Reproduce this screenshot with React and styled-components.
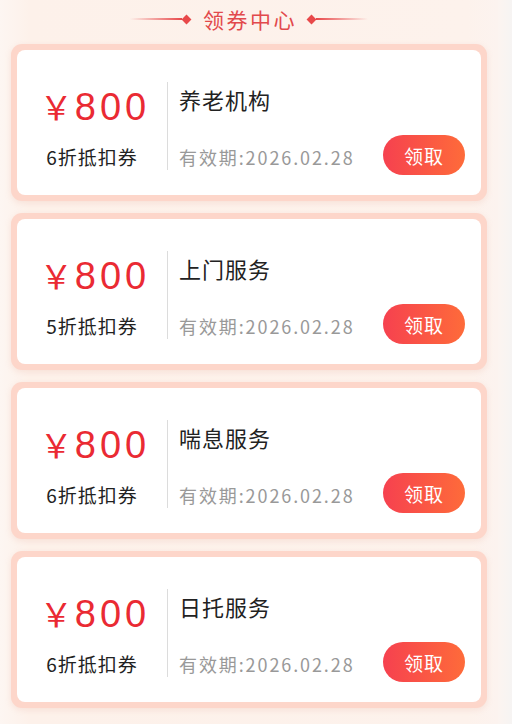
import React from 'react';
import styled, { createGlobalStyle } from 'styled-components';

const coupons = [
    { amount: 800, discount: '6折抵扣券', title: '养老机构', expire: '2026.02.28' },
    { amount: 800, discount: '5折抵扣券', title: '上门服务', expire: '2026.02.28' },
    { amount: 800, discount: '6折抵扣券', title: '喘息服务', expire: '2026.02.28' },
    { amount: 800, discount: '6折抵扣券', title: '日托服务', expire: '2026.02.28' },
];

function App() {
    return (
        <>
            <GlobalStyle />
            <Page>
                <Main>
                    <Header>
                        <Line />
                        <Diamond />
                        <HeaderTitle>领券中心</HeaderTitle>
                        <Diamond />
                        <Line right />
                    </Header>
                    <CouponList>
                        {coupons.map((c, i) => (
                            <CouponFrame key={i}>
                                <Coupon>
                                    <AmountBox>
                                        <Price>
                                            <Yen>￥</Yen>
                                            <Amount>{c.amount}</Amount>
                                        </Price>
                                        <Discount>{c.discount}</Discount>
                                    </AmountBox>
                                    <Divider />
                                    <InfoBox>
                                        <CouponTitle>{c.title}</CouponTitle>
                                        <BottomRow>
                                            <Expire>有效期:{c.expire}</Expire>
                                            <GetButton>领取</GetButton>
                                        </BottomRow>
                                    </InfoBox>
                                </Coupon>
                            </CouponFrame>
                        ))}
                    </CouponList>
                </Main>
                <Gutter />
            </Page>
        </>
    );
}

export default App;

const GlobalStyle = createGlobalStyle`
    html, body {
        margin: 0;
        padding: 0;
        background: #f7f4f3;
    }
    body {
        font-family: "Noto Sans CJK SC", "Liberation Sans", sans-serif;
    }
`;

const Page = styled.div`
    display: flex;
    width: 512px;
    min-height: 724px;
`;

const Main = styled.div`
    width: 498px;
    background: linear-gradient(90deg, #fdf6f2 0%, #fdf1ea 6%, #fdf2ec 94%, #fcf3ef 100%);
    padding-bottom: 16px;
`;

const Gutter = styled.div`
    flex: 1;
    background: linear-gradient(90deg, #fcf4f0, #f6f4f3);
`;

const Header = styled.div`
    height: 44px;
    display: flex;
    align-items: center;
    justify-content: center;
    padding-bottom: 6px;
    box-sizing: border-box;
`;

const Line = styled.div`
    width: 52px;
    height: 2px;
    background: ${({ right }) =>
        right
            ? 'linear-gradient(90deg, #e8484a, rgba(232,72,74,0))'
            : 'linear-gradient(90deg, rgba(232,72,74,0), #e8484a)'};
`;

const Diamond = styled.div`
    width: 7px;
    height: 7px;
    background: #e8484a;
    transform: rotate(45deg);
    margin: 0 1px;
`;

const HeaderTitle = styled.div`
    font-size: 21px;
    letter-spacing: 2.5px;
    color: #e2494c;
    margin: 0 10px 0 12px;
    line-height: 1;
`;

const CouponList = styled.div`
    display: flex;
    flex-direction: column;
    gap: 12px;
    padding: 0 11px;
`;

const CouponFrame = styled.div`
    background: #fdd6ca;
    border-radius: 11px;
    padding: 6px;
    box-shadow: 0 2px 6px rgba(220, 150, 130, 0.18);
`;

const Coupon = styled.div`
    background: #fff;
    border-radius: 8px;
    height: 145px;
    display: flex;
    align-items: center;
`;

const AmountBox = styled.div`
    width: 150px;
    display: flex;
    flex-direction: column;
    align-items: center;
    padding-top: 8px;
`;

const Price = styled.div`
    display: flex;
    align-items: baseline;
    color: #ea2a33;
    font-family: "Liberation Sans", Arial, sans-serif;
    line-height: 1;
    margin-left: 6px;
`;

const Yen = styled.span`
    font-family: "Noto Sans CJK SC", sans-serif;
    font-size: 33px;
    margin-right: 2px;
`;

const Amount = styled.span`
    font-size: 38px;
    letter-spacing: 4px;
`;

const Discount = styled.div`
    margin-top: 21px;
    font-size: 19px;
    letter-spacing: 1px;
    color: #222;
    line-height: 1;
`;

const Divider = styled.div`
    width: 1px;
    height: 88px;
    background: #dcdcdc;
    margin-top: 6px;
`;

const InfoBox = styled.div`
    flex: 1;
    align-self: stretch;
    display: flex;
    flex-direction: column;
    padding: 36px 16px 0 11px;
`;

const CouponTitle = styled.div`
    font-size: 22px;
    letter-spacing: 1px;
    color: #222;
    line-height: 1.2;
`;

const BottomRow = styled.div`
    display: flex;
    align-items: center;
    justify-content: space-between;
    margin-top: 23px;
`;

const Expire = styled.div`
    font-size: 18px;
    letter-spacing: 1.9px;
    color: #999;
    margin-top: 4px;
`;

const GetButton = styled.button`
    width: 82px;
    height: 40px;
    border: none;
    border-radius: 20px;
    background: linear-gradient(90deg, #f6414f, #fe6b3a);
    color: #fff;
    font-family: "Noto Sans CJK SC", sans-serif;
    font-size: 19px;
    letter-spacing: 1px;
    padding: 0;
`;
